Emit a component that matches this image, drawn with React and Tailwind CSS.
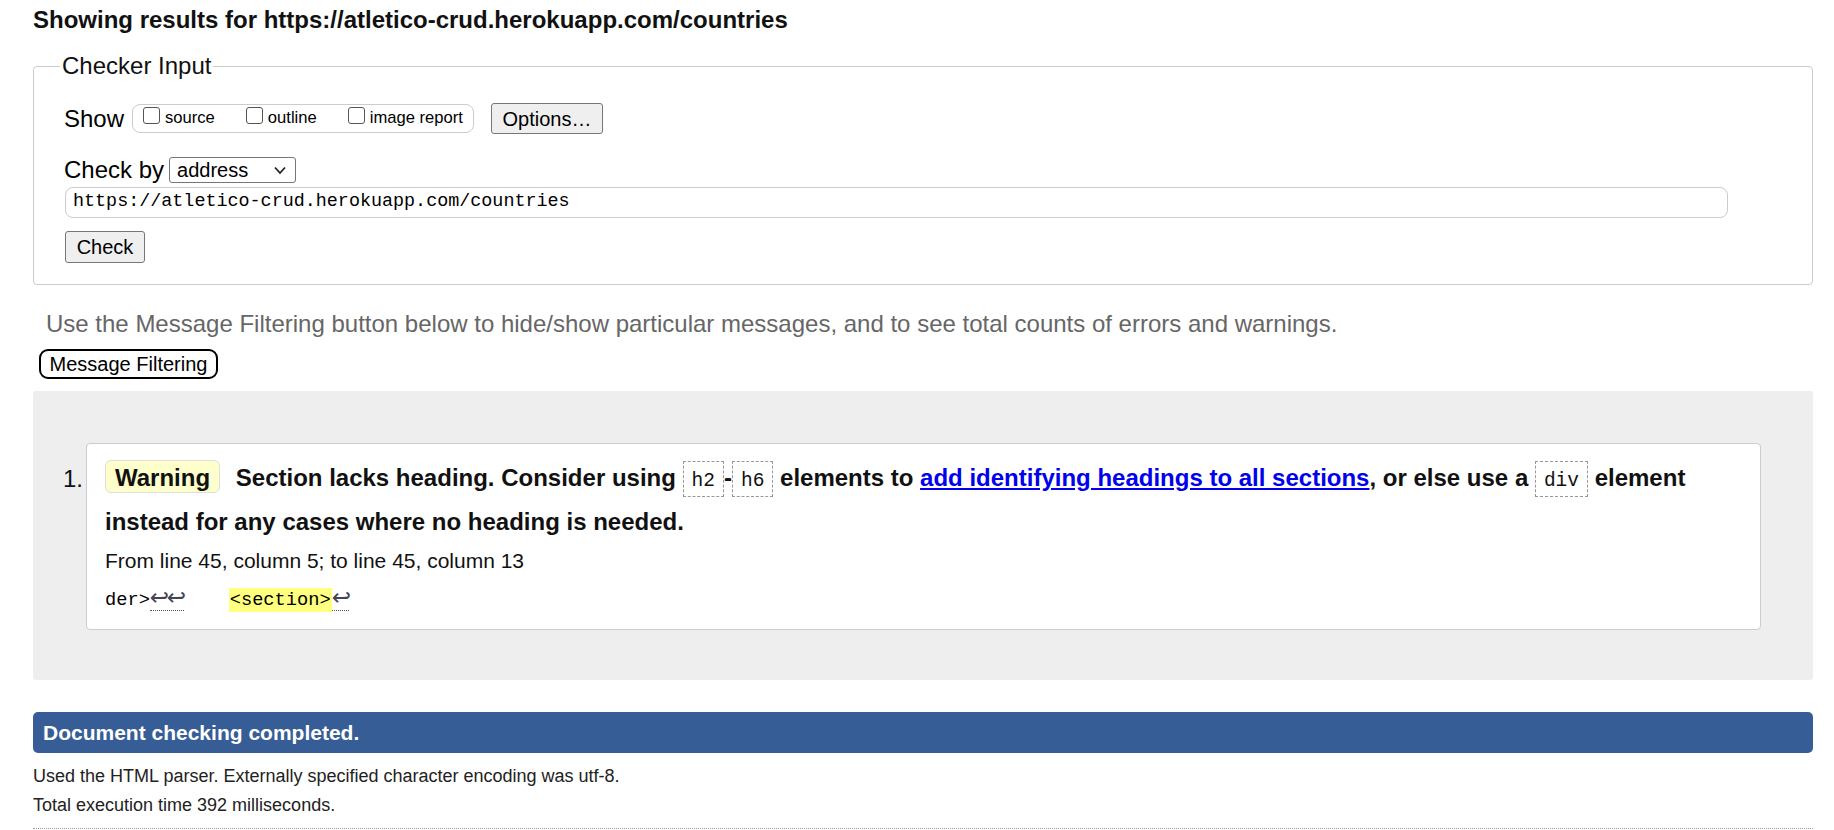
import React from 'react';

const mono = "font-['Liberation_Mono','DejaVu_Sans_Mono',monospace]";

const Code = ({ children }) => (
  <code
    className={`${mono} inline-block border border-dashed border-[#999] px-[8px] pt-[9px] pb-[4px] text-[19.5px] font-normal leading-[21px]`}
  >
    {children}
  </code>
);

// line-break marker, as the checker shows it in the extract
const Lf = ({ count = 1 }) => (
  <span className="inline-block border-b border-dotted border-[#555] text-[#445] leading-[20px]">
    {Array.from({ length: count }).map((_, i) => (
      <span key={i} className="inline-block w-[17px] text-center text-[23px] font-['DejaVu_Sans',sans-serif]">
        ↩
      </span>
    ))}
  </span>
);

const CheckOption = ({ label, first }) => (
  <label className={`flex items-center ${first ? '' : 'ml-[31px]'}`}>
    <input
      type="checkbox"
      readOnly
      className="appearance-none mb-[6px] w-[17px] h-[17px] rounded-[3px] border border-[#555] bg-white"
    />
    <span className="ml-[5px] text-[16.6px] leading-none">{label}</span>
  </label>
);

const GrayButton = ({ children, className = '' }) => (
  <button
    className={`flex items-center justify-center bg-[#efefef] border border-[#767676] rounded-[3px] text-[20px] leading-none ${className}`}
  >
    {children}
  </button>
);

export default function App() {
  return (
    <div className="min-h-screen bg-white pl-[33px] pr-[21px] font-['Liberation_Sans',Arial,sans-serif] text-black">
      {/* Heading */}
      <h2 className="pt-[6px] text-[24px] font-bold leading-[28px] text-[#111]">
        Showing results for https://atletico-crud.herokuapp.com/countries
      </h2>

      {/* Checker Input */}
      <fieldset className="mt-[18px] border border-[#ccc] rounded-[4px] pl-[26px] pr-[10px] pb-[21px]">
        <legend className="px-[2px] text-[24px] leading-[28px] text-[#111]">Checker Input</legend>
        <div className="pl-[4px]">
          <div className="mt-[23px] h-[31px] flex items-center">
            <span className="text-[24px] leading-none mr-[8px]">Show</span>
            <div className="h-[29px] flex items-center border border-[#ccc] rounded-[8px] pl-[10px] pr-[10px]">
              <CheckOption label="source" first />
              <CheckOption label="outline" />
              <CheckOption label="image report" />
            </div>
            <GrayButton className="ml-[17px] h-[31px] w-[112px]">Options…</GrayButton>
          </div>

          <div className="mt-[23px] h-[26px] flex items-center">
            <span className="text-[24px] leading-none mr-[5px]">Check by</span>
            <div className="w-[127px] h-[26px] flex items-center justify-between border border-[#767676] rounded-[3px] bg-white pl-[7px] pr-[9px]">
              <span className="text-[20px] leading-none">address</span>
              <svg width="12" height="9" viewBox="0 0 12 9">
                <polyline points="1,1.5 6,7 11,1.5" fill="none" stroke="#222" strokeWidth="1.8" />
              </svg>
            </div>
          </div>

          <div
            className={`mt-[4px] ml-[1px] h-[31px] w-[1663px] flex items-center border border-[#ccc] rounded-[8px] pl-[7px] ${mono} text-[18.4px] leading-none`}
          >
            https://atletico-crud.herokuapp.com/countries
          </div>

          <GrayButton className="mt-[13px] ml-[1px] h-[32px] w-[80px]">Check</GrayButton>
        </div>
      </fieldset>

      <p className="mt-[25px] pl-[13px] text-[24px] leading-[28px] text-[#666]">
        Use the Message Filtering button below to hide/show particular messages, and to see total counts of errors and warnings.
      </p>

      <button className="mt-[11px] ml-[6px] h-[30px] w-[179px] flex items-center justify-center border-2 border-black rounded-[9px] bg-white text-[20px] leading-none">
        Message Filtering
      </button>

      {/* Messages */}
      <div className="mt-[12px] bg-[#eee] rounded-[3px] pl-[30px] pr-[52px] pt-[52px] pb-[50px] flex items-start">
        <span className="w-[23px] mt-[14px] text-[24px] leading-[44px] text-[#111]">1.</span>
        <div className="flex-1 bg-white border border-[#ccc] rounded-[4px] pl-[18px] pt-[12px] pb-[17px]">
          <p className="text-[24px] font-bold leading-[44px] text-[#111]">
            <span className="inline-block border border-[#ddd] bg-[#ffffcc] rounded-[6px] px-[9px] pt-[3px] leading-[28px] mr-[9px]">
              Warning
            </span>{' '}
            Section lacks heading. Consider using <Code>h2</Code>-<Code>h6</Code> elements to{' '}
            <a href="#" className="text-[#0000ee] underline">
              add identifying headings to all sections
            </a>
            , or else use a <Code>div</Code> element
            <br />
            instead for any cases where no heading is needed.
          </p>
          <p className="mt-[4px] text-[21px] leading-[26px] text-[#111]">
            From line 45, column 5; to line 45, column 13
          </p>
          <p className={`mt-[13px] h-[25px] ${mono} text-[18.7px] leading-[25px] whitespace-pre`}>
            der&gt;
            <Lf count={2} />
            {'    '}
            <span className="inline-block bg-[#ffff80] px-[1px] leading-[24px]">&lt;section&gt;</span>
            <Lf />
          </p>
        </div>
      </div>

      {/* Summary */}
      <div className="mt-[32px] h-[41px] flex items-center bg-[#365d95] rounded-[5px] pl-[10px] text-[21px] font-bold text-white">
        Document checking completed.
      </div>
      <p className="mt-[11px] text-[18px] leading-[24px] text-[#222]">
        Used the HTML parser. Externally specified character encoding was utf-8.
      </p>
      <p className="mt-[5px] text-[18px] leading-[24px] text-[#222]">
        Total execution time 392 milliseconds.
      </p>
      <div className="mt-[11px] border-t border-dotted border-[#999]" />
    </div>
  );
}
